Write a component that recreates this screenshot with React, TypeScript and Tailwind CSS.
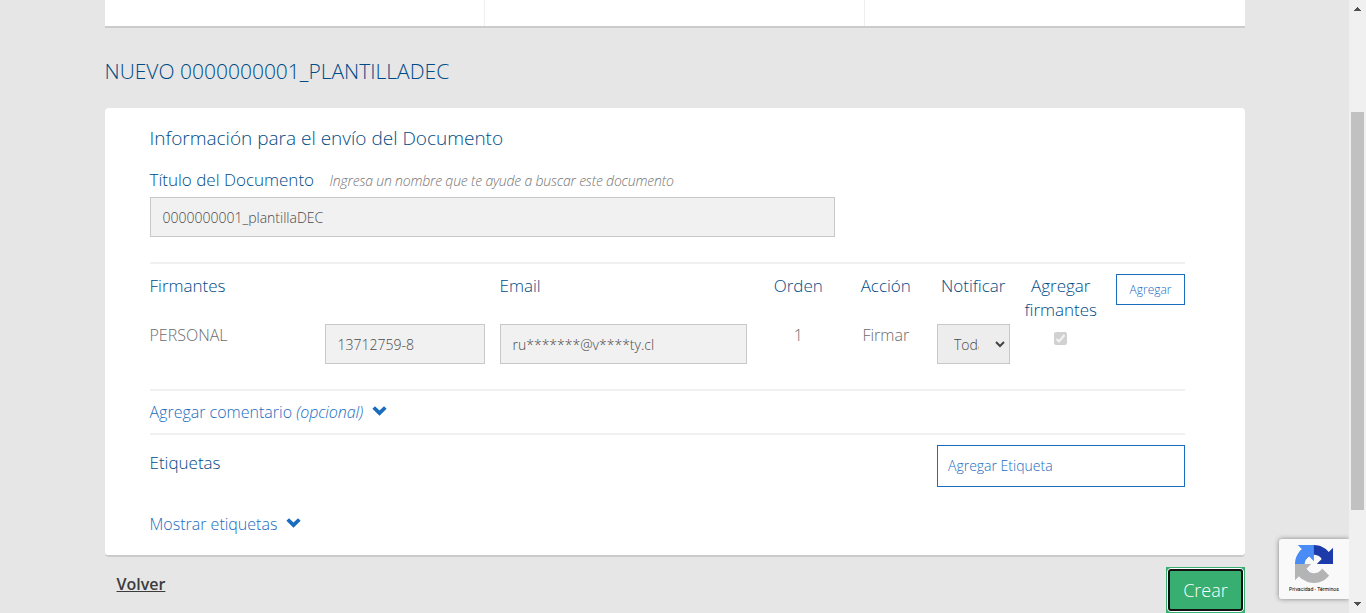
import React from "react";

function Chevron() {
  return (
    <svg className="block h-[10px] w-[15px] shrink-0" viewBox="0 0 15 10" fill="#1a6cbf">
      <path d="M0.4 2.8 3 0.2 7.5 4.6 12 0.2 14.6 2.8 7.5 9.8Z" />
    </svg>
  );
}

function RecaptchaLogo() {
  return (
    <svg className="block size-[38px]" viewBox="0 0 64 64">
      <path
        d="M64 31.955l-.033-1.37V4.687l-7.16 7.16C50.948 4.674 42.033.093 32.05.093c-10.4 0-19.622 4.96-25.458 12.64l11.736 11.86a15.55 15.55 0 0 1 4.754-5.334c2.05-1.6 4.952-2.906 8.968-2.906.485 0 .86.057 1.135.163 4.976.393 9.288 3.14 11.828 7.124l-8.307 8.307L64 31.953"
        fill="#1c3aa9"
      />
      <path
        d="M31.862.094l-1.37.033H4.594l7.16 7.16C4.58 13.147 0 22.06 0 32.046c0 10.4 4.96 19.622 12.64 25.458L24.5 45.768a15.55 15.55 0 0 1-5.334-4.754c-1.6-2.05-2.906-4.952-2.906-8.968 0-.485.057-.86.163-1.135.393-4.976 3.14-9.288 7.124-11.828l8.307 8.307L31.86.095"
        fill="#4a8cf5"
      />
      <path
        d="M.001 32.045l.033 1.37v25.898l7.16-7.16c5.86 7.173 14.774 11.754 24.76 11.754 10.4 0 19.622-4.96 25.458-12.64l-11.736-11.86a15.55 15.55 0 0 1-4.754 5.334c-2.05 1.6-4.952 2.906-8.968 2.906-.485 0-.86-.057-1.135-.163-4.976-.393-9.288-3.14-11.828-7.124l8.307-8.307c-10.522.04-22.4.066-27.295-.005"
        fill="#b4b4b4"
      />
    </svg>
  );
}

function Field({ value }: { value: string }) {
  return (
    <div className="flex h-10 items-center border border-[#c8c8c8] bg-[#f1f1f1] pt-px pl-3 text-sm text-[#4a4a4a]">
      {value}
    </div>
  );
}

function SignersTable() {
  return (
    <div className="-mx-[7.5px] grid h-[125px] grid-cols-[175px_175px_262.5px_87.5px_87.5px_87.5px_87.5px_87.5px] grid-rows-[60px_1fr] text-[17px] leading-6 text-[#004b87]">
      <div className="pt-[10px] pl-[7.5px]">Firmantes</div>
      <div />
      <div className="pt-[10px] pl-[7.5px]">Email</div>
      <div className="pt-[10px] text-center">Orden</div>
      <div className="pt-[10px] text-center">Acción</div>
      <div className="pt-[10px] text-center">Notificar</div>
      <div className="pt-[10px] text-center">
        Agregar
        <br />
        firmantes
      </div>
      <div className="flex justify-end pt-[10px] pr-[7.5px]">
        <button className="block h-[31px] w-[69px] border border-[#1a6cbf] pl-px text-xs text-[#1a6cbf]">
          Agregar
        </button>
      </div>
      <div className="-mt-px pl-[7.5px] text-base text-[#6b6b6b]">PERSONAL</div>
      <div className="px-[7.5px]">
        <Field value="13712759-8" />
      </div>
      <div className="px-[7.5px]">
        <Field value="ru*******@v****ty.cl" />
      </div>
      <div className="-mt-px text-center text-base text-[#6b6b6b]">1</div>
      <div className="-mt-px text-center text-base text-[#6b6b6b]">Firmar</div>
      <div className="px-[7.5px]">
        <div className="flex h-10 items-center border border-[#c8c8c8] bg-[#ededed] pl-4 text-sm text-[#4a4a4a]">
          <span className="w-[25px] overflow-hidden pt-[2px]">Todas</span>
          <svg className="ml-4 h-[7px] w-[10px] shrink-0" viewBox="0 0 10 7" fill="none" stroke="#444" strokeWidth="2">
            <path d="M1 1 5 5 9 1" />
          </svg>
        </div>
      </div>
      <div className="flex justify-center pt-2">
        <div className="flex size-[13px] items-center justify-center rounded-[2px] bg-[#d1d1d1]">
          <svg className="size-[11px]" viewBox="0 0 11 11" fill="none" stroke="#f4f4f4" strokeWidth="2">
            <path d="M1.5 6 4 8.5 9.5 2" />
          </svg>
        </div>
      </div>
    </div>
  );
}

function Scrollbar() {
  return (
    <div className="flex h-full w-[17px] shrink-0 flex-col items-center bg-[#f0f0f0]">
      <svg className="mt-[7px] h-1 w-[7px] shrink-0" viewBox="0 0 7 4" fill="#505050" shapeRendering="crispEdges">
        <path d="M3 0h1v1h1v1h1v1h1v1H0V3h1V2h1V1h1z" />
      </svg>
      <div className="mt-[101px] h-[398px] w-[13px] bg-[#c1c1c1]" />
      <svg className="mt-[92px] h-1 w-[7px] shrink-0" viewBox="0 0 7 4" fill="#505050" shapeRendering="crispEdges">
        <path d="M0 0h7v1H6v1H5v1H4v1H3V3H2V2H1V1H0z" />
      </svg>
    </div>
  );
}

export default function App() {
  return (
    <div className="relative flex h-[613px] w-[1366px] overflow-hidden bg-[#e6e6e6] font-['Open_Sans',sans-serif] font-light whitespace-nowrap">
      <main className="flex h-full w-[1349px] flex-col pl-[104.5px]">
        <div className="flex h-7 w-[1140px] shrink-0 border-b-2 border-[#cbcbcb] bg-white">
          <div className="w-[380px] border-r border-[#efefef]" />
          <div className="w-[380px] border-r border-[#efefef]" />
        </div>
        <h1 className="mt-[28px] h-[52px] shrink-0 text-[21px] leading-[30px] text-[#004b87]">
          NUEVO 0000000001_PLANTILLADEC
        </h1>

        <section className="h-[449px] w-[1140px] shrink-0 rounded border-b-2 border-[#cbcbcb] bg-white pr-[60px] pl-[45px]">
          <h2 className="pt-[16px] text-[19px] leading-[28px] text-[#004b87]">Información para el envío del Documento</h2>
          <div className="mt-4 flex h-6 text-[17px] leading-6 text-[#004b87]">
            <span>Título del Documento</span>
            <span className="ml-[15.5px] pt-px text-sm leading-6 tracking-[-0.19px] text-[#757575] italic">
              Ingresa un nombre que te ayude a buscar este documento
            </span>
          </div>
          <div className="mt-[5px] mb-[25px] w-[685px]">
            <Field value="0000000001_plantillaDEC" />
          </div>
          <div className="border-t-2 border-[#f0f0f0]">
            <SignersTable />
          </div>
          <div className="flex h-11 border-t-2 border-[#f0f0f0] pt-[9px] text-base leading-6 text-[#1a6cbf]">
            <span>
              Agregar comentario <i className="tracking-[-0.1px]">(opcional)</i>
            </span>
            <span className="mt-[6px] ml-[8.5px]">
              <Chevron />
            </span>
          </div>
          <div className="flex h-[79px] justify-between border-t-2 border-[#f0f0f0] text-[17px] text-[#004b87]">
            <div className="pt-4 leading-6">Etiquetas</div>
            <div className="mt-[10px] flex h-[42px] w-[248px] items-center border border-[#1a6cbf] pl-[10.5px] text-sm text-[#1a6cbf]">
              Agregar Etiqueta
            </div>
          </div>
          <div className="flex text-base leading-6 text-[#1a6cbf]">
            <span>Mostrar etiquetas</span>
            <span className="mt-[6px] ml-[8.5px]">
              <Chevron />
            </span>
          </div>
        </section>

        <footer className="flex w-[1140px] shrink-0 justify-between">
          <a className="mt-[15px] ml-3 text-base leading-6 font-semibold text-[#3c3c3c] underline">Volver</a>
          <div className="mt-[10px] h-[46px] w-[79px] bg-[#38ae70] p-px">
            <button className="flex size-full items-center justify-center rounded-[4px] border border-white bg-white text-lg text-white">
              <span className="flex size-full items-center justify-center rounded-[3px] border-2 border-[#101010] bg-[#38ae70] pl-px">
                Crear
              </span>
            </button>
          </div>
        </footer>
      </main>

      <div className="absolute top-[539px] left-[1279px] flex h-[60px] w-[70px] flex-col items-center overflow-hidden rounded-l-[3px] bg-[#f9f9f9] pt-[6px] shadow-[0_0_5px_#808080]">
        <RecaptchaLogo />
        <div className="mt-[2px] font-['Roboto',sans-serif] text-[5.2px] leading-[9px] font-normal text-black">Privacidad - Términos</div>
      </div>
      <div className="z-10 h-full">
        <Scrollbar />
      </div>
    </div>
  );
}
